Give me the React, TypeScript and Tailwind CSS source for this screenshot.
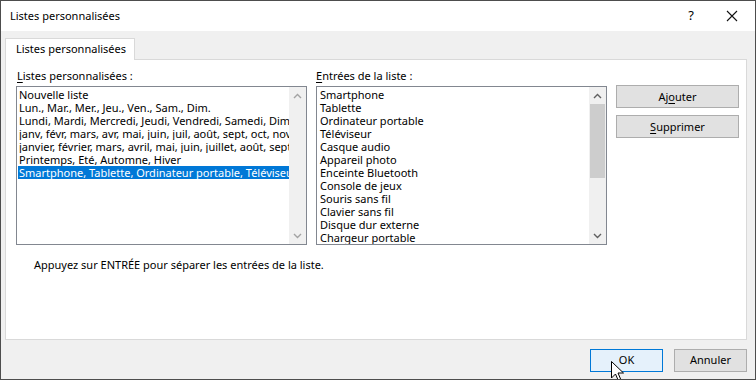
import React from "react";

const lists = [
  "Nouvelle liste",
  "Lun., Mar., Mer., Jeu., Ven., Sam., Dim.",
  "Lundi, Mardi, Mercredi, Jeudi, Vendredi, Samedi, Dimanche",
  "janv, févr, mars, avr, mai, juin, juil, août, sept, oct, nov, déc",
  "janvier, février, mars, avril, mai, juin, juillet, août, septembre",
  "Printemps, Eté, Automne, Hiver",
  "Smartphone, Tablette, Ordinateur portable, Téléviseur, Casque audio",
];

const entries = [
  "Smartphone",
  "Tablette",
  "Ordinateur portable",
  "Téléviseur",
  "Casque audio",
  "Appareil photo",
  "Enceinte Bluetooth",
  "Console de jeux",
  "Souris sans fil",
  "Clavier sans fil",
  "Disque dur externe",
  "Chargeur portable",
];

// small chevron for the scrollbar arrows
function Chevron({ up, color }: { up?: boolean; color: string }) {
  return (
    <svg width="9" height="6" viewBox="0 0 9 6">
      <path
        d={up ? "M1 5 L4.5 1.5 L8 5" : "M1 1 L4.5 4.5 L8 1"}
        fill="none"
        stroke={color}
        strokeWidth="1.4"
      />
    </svg>
  );
}

function Scrollbar({ active }: { active?: boolean }) {
  const c = active ? "#606060" : "#a3a3a3";
  return (
    <div className="w-[17px] h-full bg-[#f0f0f0] flex flex-col items-center shrink-0">
      <div className="h-[17px] flex items-center justify-center">
        <Chevron up color={c} />
      </div>
      <div className="flex-1 w-full px-[1px]">
        {active && <div className="h-[74px] w-full bg-[#cdcdcd]" />}
      </div>
      <div className="h-[17px] flex items-center justify-center">
        <Chevron color={c} />
      </div>
    </div>
  );
}

function Button({ ul, rest, pre = "" }: { ul: string; rest: string; pre?: string }) {
  return (
    <div className="w-[123px] h-[23px] border border-[#adadad] bg-[#e1e1e1] flex items-center justify-center leading-none">
      <span>
        {pre}
        <span className="underline underline-offset-2">{ul}</span>
        {rest}
      </span>
    </div>
  );
}

export default function App() {
  return (
    <div className="relative w-[756px] h-[380px] overflow-hidden border border-[#4d4d4d] bg-[#f0f0f0] flex flex-col text-[11px] text-black font-['Segoe_UI','Noto_Sans',sans-serif]">
      {/* Title bar */}
      <div className="h-[30px] bg-white flex items-center shrink-0">
        <span className="pl-[9px] flex-1">Listes personnalisées</span>
        <span className="w-[20px] text-center text-[13px] mr-[25px]">?</span>
        <svg width="12" height="12" viewBox="0 0 12 12" className="mr-[17px]">
          <path d="M1 1 L11 11 M11 1 L1 11" stroke="#111" strokeWidth="1.1" />
        </svg>
      </div>

      {/* Body */}
      <div className="pl-[4px] pr-[8px] pt-[7px] flex flex-col flex-1">
        <div className="flex">
          <div className="relative z-10 -mb-px h-[22px] w-[130px] border border-b-0 border-[#d9d9d9] bg-white flex items-center pl-[10px]">
            Listes personnalisées
          </div>
        </div>
        <div className="h-[281px] border border-[#d9d9d9] bg-white pl-[10px] pt-[8px]">
          <div className="flex gap-[9px]">
            {/* Left list */}
            <div className="w-[291px]">
              <div className="h-[18px] pl-px leading-[16px]">
                <span className="underline underline-offset-2">L</span>istes personnalisées :
              </div>
              <div className="h-[159px] border border-[#828790] flex">
                <div className="flex-1 pt-[1px] pl-[1px] overflow-hidden">
                  {lists.map((l, i) => (
                    <div
                      key={l}
                      className={
                        "h-[13px] leading-[13px] whitespace-nowrap overflow-hidden pl-[1px] " +
                        (i === lists.length - 1 ? "bg-[#0078d7] text-white" : "")
                      }
                    >
                      {l}
                    </div>
                  ))}
                </div>
                <Scrollbar />
              </div>
            </div>

            {/* Right list */}
            <div className="w-[291px]">
              <div className="h-[18px] leading-[16px]">
                <span className="underline underline-offset-2">E</span>ntrées de la liste :
              </div>
              <div className="h-[159px] border border-[#828790] flex">
                <div className="flex-1 pt-[1px] pl-[3px] overflow-hidden">
                  {entries.map((e) => (
                    <div key={e} className="h-[13px] leading-[13px] whitespace-nowrap">
                      {e}
                    </div>
                  ))}
                </div>
                <Scrollbar active />
              </div>
            </div>

            {/* Actions */}
            <div className="flex flex-col gap-[7px] pt-[17px]">
              <Button pre="Aj" ul="o" rest="uter" />
              <Button ul="S" rest="upprimer" />
            </div>
          </div>

          <div className="pl-[18px] pt-[12px]">Appuyez sur ENTRÉE pour séparer les entrées de la liste.</div>
        </div>

        {/* Footer */}
        <div className="flex justify-end gap-[11px] pt-[9px]">
          <div className="w-[73px] h-[23px] border border-[#0078d7] bg-[#e5f1fb] flex items-center justify-center">OK</div>
          <div className="w-[73px] h-[23px] border border-[#adadad] bg-[#e1e1e1] flex items-center justify-center">Annuler</div>
        </div>
      </div>

      {/* mouse cursor over OK */}
      <svg className="absolute left-[610px] top-[360px]" width="14" height="22" viewBox="0 0 14 22">
        <path d="M0.5 0.5 L0.5 17 L4.5 13 L7.5 20 L10 19 L7 12 L12.5 12 Z" fill="white" stroke="black" strokeWidth="1" />
      </svg>
    </div>
  );
}
